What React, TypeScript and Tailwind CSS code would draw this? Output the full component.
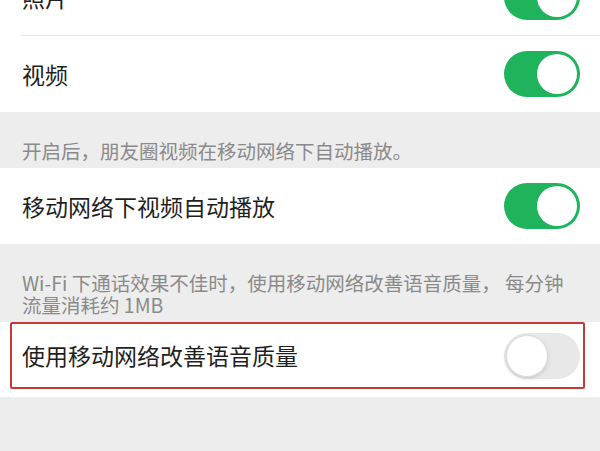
import React from "react";

function Toggle({ on }: { on: boolean }) {
  return (
    <div
      className={
        on
          ? "w-[76px] h-[46px] rounded-full bg-[#1fb35b] p-[3px] flex justify-end shrink-0"
          : "w-[76px] h-[46px] rounded-full bg-[#e8e8e8] p-[2px] flex justify-start shrink-0"
      }
    >
      <div
        className={
          on
            ? "w-[40px] h-[40px] rounded-full bg-white"
            : "w-[42px] h-[42px] rounded-full bg-white border border-[#dcdcdc] shadow-[0_2px_4px_rgba(0,0,0,0.12)]"
        }
      />
    </div>
  );
}

function Row({ label, on }: { label: string; on: boolean }) {
  return (
    <div className="h-[76px] flex items-center justify-between pl-[22px] pr-[20px]">
      <span className="text-[23px] text-[#1f1f1f]">{label}</span>
      <Toggle on={on} />
    </div>
  );
}

export default function App() {
  return (
    <div
      className="w-[600px] h-[451px] overflow-hidden bg-[#ededed]"
      style={{ fontFamily: '"Noto Sans CJK SC", "Noto Sans", sans-serif' }}
    >
      <div className="-mt-[41px] bg-white">
        <Row label="照片" on />
        <div className="ml-[21px] h-px bg-[#e6e6e6]" />
        <Row label="视频" on />
      </div>

      <div className="pt-[27px] pb-[5px] pl-[22px] text-[19.5px] leading-[24px] text-[#8a8a8a]">
        开启后，朋友圈视频在移动网络下自动播放。
      </div>

      <div className="bg-white">
        <Row label="移动网络下视频自动播放" on />
      </div>

      <div className="pt-[28px] pb-[6px] pl-[22px] text-[19.5px] leading-[22px] text-[#8a8a8a]">
        <div>Wi-Fi 下通话效果不佳时，使用移动网络改善语音质量， 每分钟</div>
        <div>流量消耗约 1MB</div>
      </div>

      <div className="bg-white pb-[8px]">
        <div className="ml-[10px] mr-[15px] h-[67px] border-2 border-[#c93a36] rounded-[2px] flex items-center justify-between pl-[10px] pr-[3px]">
          <span className="text-[23px] text-[#1f1f1f]">使用移动网络改善语音质量</span>
          <Toggle on={false} />
        </div>
      </div>
    </div>
  );
}
